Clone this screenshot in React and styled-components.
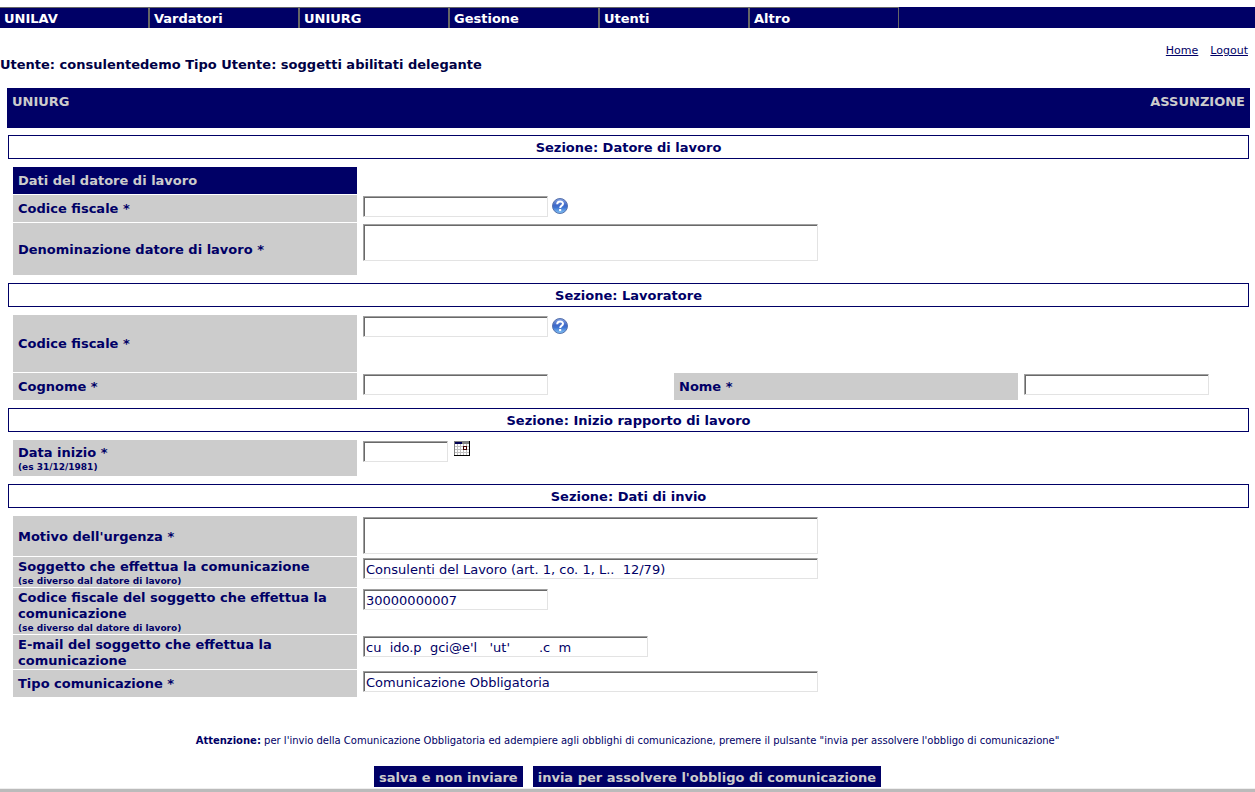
import React from "react";
import styled, { createGlobalStyle, ThemeProvider } from "styled-components";

const theme = {
  navy: "#000066",
  grey: "#cccccc",
  line: "#666666"
};

const GlobalStyle = createGlobalStyle`
  *, *::before, *::after {
    box-sizing: border-box;
  }
  body {
    margin: 0;
    background-color: #fff;
    color: ${p => p.theme.navy};
    font-family: Verdana, "DejaVu Sans", sans-serif;
    font-size: 13px;
    line-height: 16px;
  }
`;

const Page = styled.div`
  padding-top: 7px;
  border-bottom: 3px solid #bbbbbb;
`;

const Nav = styled.nav`
  background-color: ${p => p.theme.navy};
  overflow: hidden;
`;

const Menu = styled.ul`
  display: flex;
  list-style: none;
  margin: 0 0 0 -1px;
  padding: 0;
`;

const MenuItem = styled.li`
  width: 150px;
  border: 1px solid ${p => p.theme.line};
  border-bottom: 0;
`;

const MenuLink = styled.a`
  display: block;
  padding: 3px 4px 1px;
  color: #fff;
  font-weight: 700;
  text-decoration: none;
`;

const Links = styled.div`
  display: flex;
  justify-content: flex-end;
  gap: 12px;
  padding: 16px 7px 0 0;
  font-size: 11px;
  line-height: 13px;
`;

const TopLink = styled.a`
  color: ${p => p.theme.navy};
`;

const User = styled.p`
  margin: 0 0 15px;
  font-weight: 700;
  color: #000044;
`;

const Title = styled.header`
  display: flex;
  justify-content: space-between;
  min-height: 40px;
  margin: 0 5px 7px 7px;
  padding: 6px 5px;
  background-color: ${p => p.theme.navy};
  color: ${p => p.theme.grey};
  font-weight: 700;
`;

const Section = styled.section`
  margin: 0 6px 8px 8px;
`;

const Heading = styled.h2`
  margin: 0 0 8px;
  padding: 4px 3px 2px;
  border: 1px solid ${p => p.theme.navy};
  font-size: 13px;
  font-weight: 700;
  text-align: center;
`;

const Rows = styled.div`
  display: grid;
  grid-template-columns: 344px 1fr 344px 231px;
  row-gap: 1px;
  margin-left: 5px;
`;

const Label = styled.label`
  display: flex;
  flex-direction: column;
  justify-content: center;
  min-height: ${p => p.$height || 27}px;
  padding: 1px 5px 0;
  background-color: ${p => p.theme.grey};
  font-weight: 700;
`;

const GroupTitle = styled.h3`
  grid-column: 1 / 2;
  min-height: 27px;
  margin: 0;
  padding: 6px 5px 5px;
  background-color: ${p => p.theme.navy};
  color: ${p => p.theme.grey};
  font-size: 13px;
  font-weight: 700;
`;

const Hint = styled.small`
  font-size: 9px;
  line-height: 12px;
`;

const Field = styled.div`
  grid-column: ${p => (p.$half ? "auto" : "2 / -1")};
  display: flex;
  align-items: flex-start;
  gap: ${p => p.$gap || 4}px;
  padding: 1px 0 0 6px;
`;

const sizes = { date: 85, code: 185, mail: 285, full: 455 };

// sunken two-tone edge of the old native text boxes
const Input = styled.input`
  width: ${p => sizes[p.$size || "code"]}px;
  height: 21px;
  padding: 1px 2px 0;
  border: 1px solid;
  border-color: #a0a0a0 #e3e3e3 #e3e3e3 #a0a0a0;
  border-radius: 0;
  box-shadow: inset 1px 1px 0 #696969;
  background-color: #fff;
  color: ${p => p.theme.navy};
  font: inherit;
  outline: 0;
`;

const TextArea = styled(Input).attrs({ as: "textarea" })`
  display: block;
  height: 37px;
  resize: none;
`;

const IconButton = styled.button`
  display: flex;
  padding: 0;
  margin-top: ${p => p.$top || 0}px;
  border: 0;
  background: none;
  cursor: pointer;
`;

const Note = styled.p`
  margin: 37px 0 18px;
  font-size: 10px;
  line-height: 14px;
  text-align: center;
`;

const Buttons = styled.div`
  display: flex;
  justify-content: center;
  gap: 10px;
  padding-bottom: 1px;
  border-bottom: 1px solid #eeeeee;
`;

const Button = styled.button`
  height: 21px;
  padding: 3px 5px 0;
  border: 0;
  background-color: ${p => p.theme.navy};
  color: ${p => p.theme.grey};
  font: inherit;
  font-weight: 700;
  white-space: nowrap;
  cursor: pointer;
`;

const HelpIcon = () => (
  <svg width="16" height="16" viewBox="0 0 16 16" aria-hidden="true">
    <defs>
      <linearGradient id="help" x1="0" y1="0" x2="0" y2="1">
        <stop offset="0" stopColor="#86a4e4" />
        <stop offset="0.45" stopColor="#3f68c8" />
        <stop offset="0.6" stopColor="#3f74d2" />
        <stop offset="1" stopColor="#86c8f8" />
      </linearGradient>
    </defs>
    <circle cx="8" cy="8" r="7.5" fill="url(#help)" stroke="#5872ac" />
    <path
      d="M5.2 6.2C5.2 2.6 11 2.6 11 5.8C11 7.8 8.2 7.6 8.2 9.9"
      fill="none"
      stroke="#fff"
      strokeWidth="2"
    />
    <rect x="7.1" y="11" width="2.1" height="2.1" fill="#fff" />
  </svg>
);

const CalendarIcon = () => (
  <svg
    width="16"
    height="15"
    viewBox="0 0 16 15"
    shapeRendering="crispEdges"
    aria-hidden="true"
  >
    <rect width="16" height="15" fill="#000" />
    <rect width="15" height="14" fill="#808080" />
    <rect x="1" y="1" width="7" height="2" fill="#000055" />
    <rect x="1" y="3" width="14" height="11" fill="#fff" />
    <path
      d="M3.5 3v11M6.5 3v11M9.5 3v11M12.5 3v11M1 5.5h14M1 8.5h14M1 11.5h14"
      stroke="#c0c0c0"
    />
    <rect x="9.5" y="5.5" width="3" height="3" fill="#fff" stroke="#400000" />
  </svg>
);

const Help = () => (
  <IconButton type="button" aria-label="Aiuto" $top={2}>
    <HelpIcon />
  </IconButton>
);

const menu = ["UNILAV", "Vardatori", "UNIURG", "Gestione", "Utenti", "Altro"];

const App = () => (
  <ThemeProvider theme={theme}>
    <GlobalStyle />
    <Page>
      <Nav>
        <Menu>
          {menu.map(name => (
            <MenuItem key={name}>
              <MenuLink href="#">{name}</MenuLink>
            </MenuItem>
          ))}
        </Menu>
      </Nav>
      <Links>
        <TopLink href="#">Home</TopLink>
        <TopLink href="#">Logout</TopLink>
      </Links>
      <User>
        Utente: consulentedemo Tipo Utente: soggetti abilitati delegante
      </User>
      <Title>
        <span>UNIURG</span>
        <span>ASSUNZIONE</span>
      </Title>
      <form>
        <Section>
          <Heading>Sezione: Datore di lavoro</Heading>
          <Rows>
            <GroupTitle>Dati del datore di lavoro</GroupTitle>
            <Field />
            <Label htmlFor="cf-datore">Codice fiscale *</Label>
            <Field>
              <Input id="cf-datore" />
              <Help />
            </Field>
            <Label htmlFor="denominazione" $height={52}>
              Denominazione datore di lavoro *
            </Label>
            <Field>
              <TextArea id="denominazione" $size="full" />
            </Field>
          </Rows>
        </Section>
        <Section>
          <Heading>Sezione: Lavoratore</Heading>
          <Rows>
            <Label htmlFor="cf-lavoratore" $height={57}>
              Codice fiscale *
            </Label>
            <Field>
              <Input id="cf-lavoratore" />
              <Help />
            </Field>
            <Label htmlFor="cognome">Cognome *</Label>
            <Field $half>
              <Input id="cognome" />
            </Field>
            <Label htmlFor="nome">Nome *</Label>
            <Field $half>
              <Input id="nome" />
            </Field>
          </Rows>
        </Section>
        <Section>
          <Heading>Sezione: Inizio rapporto di lavoro</Heading>
          <Rows>
            <Label htmlFor="data" $height={36}>
              Data inizio *<Hint>(es 31/12/1981)</Hint>
            </Label>
            <Field $gap={6}>
              <Input id="data" $size="date" />
              <IconButton type="button" aria-label="Calendario">
                <CalendarIcon />
              </IconButton>
            </Field>
          </Rows>
        </Section>
        <Section>
          <Heading>Sezione: Dati di invio</Heading>
          <Rows>
            <Label htmlFor="motivo" $height={40}>
              Motivo dell'urgenza *
            </Label>
            <Field>
              <TextArea id="motivo" $size="full" />
            </Field>
            <Label htmlFor="soggetto" $height={30}>
              Soggetto che effettua la comunicazione
              <Hint>(se diverso dal datore di lavoro)</Hint>
            </Label>
            <Field>
              <Input
                id="soggetto"
                $size="full"
                defaultValue="Consulenti del Lavoro (art. 1, co. 1, L..  12/79)"
              />
            </Field>
            <Label htmlFor="cf-soggetto" $height={46}>
              Codice fiscale del soggetto che effettua la comunicazione
              <Hint>(se diverso dal datore di lavoro)</Hint>
            </Label>
            <Field>
              <Input id="cf-soggetto" defaultValue="30000000007" />
            </Field>
            <Label htmlFor="email" $height={34}>
              E-mail del soggetto che effettua la comunicazione
            </Label>
            <Field>
              <Input
                id="email"
                $size="mail"
                defaultValue="cu  ido.p  gci@e'l   'ut'       .c  m"
              />
            </Field>
            <Label htmlFor="tipo">Tipo comunicazione *</Label>
            <Field>
              <Input
                id="tipo"
                $size="full"
                defaultValue="Comunicazione Obbligatoria"
              />
            </Field>
          </Rows>
        </Section>
        <Note>
          <b>Attenzione:</b> per l'invio della Comunicazione Obbligatoria ed
          adempiere agli obblighi di comunicazione, premere il pulsante "invia
          per assolvere l'obbligo di comunicazione"
        </Note>
        <Buttons>
          <Button type="button">salva e non inviare</Button>
          <Button type="submit">
            invia per assolvere l'obbligo di comunicazione
          </Button>
        </Buttons>
      </form>
    </Page>
  </ThemeProvider>
);

export default App;
